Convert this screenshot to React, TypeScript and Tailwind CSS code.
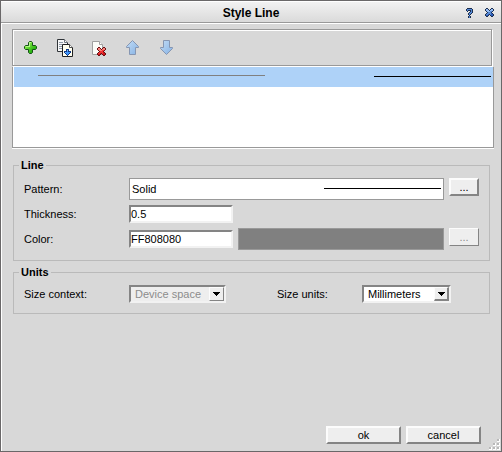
import type { ReactNode } from "react";

const bevel =
  "border-2 border-t-[#fcfcfc] border-l-[#fcfcfc] border-r-[#848484] border-b-[#848484] bg-[#eeeeee]";
const sunken =
  "border-2 border-t-[#848484] border-l-[#848484] border-r-[#f2f2f2] border-b-[#f2f2f2]";

const crossMap = [
  ".kk...kk.",
  "kllk.kllk",
  "klllklllk",
  ".klllmmk.",
  "..kmmmk..",
  ".kmmmmdk.",
  "kmmdkmddk",
  "kddk.kddk",
  ".kk...kk.",
];

const helpMap = [
  ".kkkkk.",
  "kmmmmmk",
  "kmkkkmk",
  ".k..kmk",
  "...kmmk",
  "..kmmk.",
  "..kmk..",
  "...k...",
  "..kmk..",
  "..kmk..",
];

const smallArrowMap = [
  "..kkk..",
  "..klk..",
  "kkkmkkk",
  "klmmmmk",
  ".kmmmk.",
  "..kmk..",
  "...k...",
];

const blue: Record<string, string> = { k: "#1c2f50", l: "#94bcf4", m: "#5688d4", d: "#2c5cb8" };
const red: Record<string, string> = { k: "#681014", l: "#fc8078", m: "#f03434", d: "#cc1418" };
const bright: Record<string, string> = { k: "#123884", l: "#7cc0ff", m: "#3c94fa", d: "#2c70e0" };

function Pixels({
  map,
  palette,
  x = 0,
  y = 0,
}: {
  map: string[];
  palette: Record<string, string>;
  x?: number;
  y?: number;
}) {
  return (
    <g shapeRendering="crispEdges">
      {map.flatMap((row, r) =>
        [...row].map((cell, c) =>
          cell === "." ? null : (
            <rect key={`${r}-${c}`} x={x + c} y={y + r} width="1" height="1" fill={palette[cell]} />
          ),
        ),
      )}
    </g>
  );
}

function AddIcon() {
  return (
    <svg width="18" height="18" viewBox="0 0 18 18" aria-hidden="true">
      <defs>
        <linearGradient id="add" x1="0" y1="0" x2="1" y2="1">
          <stop offset="0.2" stopColor="#8cf04a" />
          <stop offset="0.8" stopColor="#18a808" />
        </linearGradient>
      </defs>
      <path
        d="M6.5 3.5l1-1h2l1 1v3h3l1 1v2l-1 1h-3v3l-1 1h-2l-1-1v-3h-3l-1-1v-2l1-1h3z"
        fill="url(#add)"
        stroke="#17501a"
      />
      <path d="M7.5 7V3.500h1.500M4 7.500h4" fill="none" stroke="#b4f88a" />
    </svg>
  );
}

function CopyIcon() {
  return (
    <svg width="18" height="18" viewBox="0 0 18 18" aria-hidden="true">
      <path d="M1.500 0.500h7l3 3v9h-10z" fill="#f8f8f8" stroke="#303438" />
      <path d="M3 3.500h4M3 5.500h3M3 7.500h3M3 9.500h3" stroke="#8e9aa8" />
      <path d="M8.500 0.500v3h3" fill="#ffffff" stroke="#707880" />
      <path d="M6.500 5.500h7l3 3v9h-10z" fill="#fffff0" stroke="#202020" />
      <path d="M13.500 5.500v3h3" fill="#ffffff" stroke="#505050" />
      <Pixels map={smallArrowMap} palette={bright} x={8} y={10} />
    </svg>
  );
}

function DeleteIcon() {
  return (
    <svg width="18" height="18" viewBox="0 0 18 18" aria-hidden="true">
      <path d="M2.500 2.500h7l3 3v10h-10z" fill="#fbfcf8" stroke="#a0a0a0" />
      <path d="M9.500 2.500v3h3" fill="#ffffff" stroke="#a0a0a0" />
      <Pixels map={crossMap} palette={red} x={7} y={8} />
    </svg>
  );
}

function ArrowIcon({ down = false }: { down?: boolean }) {
  return (
    <svg width="18" height="18" viewBox="0 0 18 18" aria-hidden="true">
      <defs>
        <linearGradient id={down ? "down" : "up"} x1="0" y1="0" x2="1" y2="1">
          <stop offset="0" stopColor="#c2dcf6" />
          <stop offset="1" stopColor="#86b2e4" />
        </linearGradient>
      </defs>
      <path
        d={
          down
            ? "M5.500 1.500h6v7h3v1l-6 6-6-6v-1h3z"
            : "M8.500 1.500l6 6v1h-3v7h-6v-7h-3v-1z"
        }
        fill={down ? "url(#down)" : "url(#up)"}
        stroke="#8696b2"
      />
    </svg>
  );
}

function ToolButton({ label, disabled, children }: { label: string; disabled?: boolean; children: ReactNode }) {
  return (
    <button type="button" aria-label={label} disabled={disabled} className="px-2 pt-[9px] pb-2">
      {children}
    </button>
  );
}

function Group({ title, children }: { title: string; children: ReactNode }) {
  return (
    <fieldset className="ml-px mr-1 border border-[#bababa] px-[10px] pt-[6px] pb-[10px]">
      <legend className="-ml-[5px] px-[2px] font-bold leading-[13px]">{title}</legend>
      {children}
    </fieldset>
  );
}

function Select({ id, value, disabled }: { id: string; value: string; disabled?: boolean }) {
  return (
    <div className={`relative h-[18px] ${sunken} ${disabled ? "w-[97px] bg-[#eeeeee]" : "w-[89px] bg-white"}`}>
      <select
        id={id}
        disabled={disabled}
        className="block h-[14px] w-full appearance-none bg-transparent pl-1 leading-[14px] outline-none disabled:text-[#8c8c8c] disabled:opacity-100"
      >
        <option>{value}</option>
      </select>
      <span
        className={`pointer-events-none absolute top-0 right-0 flex h-[14px] w-[15px] items-center justify-center border-t border-l border-t-[#fcfcfc] border-l-[#fcfcfc] border-r-[#848484] border-b-[#848484] bg-[#eeeeee] ${disabled ? "border-r border-b" : "border-r-2 border-b-2"}`}
      >
        <svg width="7" height="4" viewBox="0 0 7 4" shapeRendering="crispEdges" aria-hidden="true">
          <path d="M0 0h7v1h-1v1h-1v1h-1v1h-1v-1h-1v-1h-1v-1h-1z" />
        </svg>
      </span>
    </div>
  );
}

function Grip() {
  return (
    <svg
      className="absolute right-px bottom-px"
      width="12"
      height="12"
      viewBox="0 0 12 12"
      shapeRendering="crispEdges"
      aria-hidden="true"
    >
      {[
        [9, 1],
        [5, 5],
        [9, 5],
        [1, 9],
        [5, 9],
        [9, 9],
      ].map(([x, y]) => (
        <g key={`${x}-${y}`}>
          <rect x={x} y={y} width="3" height="3" fill="#ffffff" />
          <rect x={x} y={y} width="2" height="2" fill="#b8b8b8" />
        </g>
      ))}
    </svg>
  );
}

export default function App() {
  return (
    <main className="relative flex min-h-screen flex-col border border-[#6a6869] bg-[#d8d8d8] font-['Liberation_Sans',Arial,sans-serif] text-[11px] leading-[14px] text-black">
      <header className="grid h-[23px] grid-cols-[1fr_auto_1fr] items-center border-t border-b border-white bg-linear-to-b from-[#f2f2f2] to-[#d9d9d9] shadow-[inset_0_-1px_0_#999999]">
        <h1 className="col-start-2 text-[12px] font-bold">Style Line</h1>
        <div className="flex items-center justify-end gap-3 pr-[7px]">
          <button type="button" aria-label="Help">
            <svg width="7" height="10" viewBox="0 0 7 10" aria-hidden="true">
              <Pixels map={helpMap} palette={blue} />
            </svg>
          </button>
          <button type="button" aria-label="Close">
            <svg width="9" height="9" viewBox="0 0 9 9" aria-hidden="true">
              <Pixels map={crossMap} palette={blue} />
            </svg>
          </button>
        </div>
      </header>

      <div className="flex grow flex-col border-l border-white pt-[5px] pr-[7px] pb-[7px] pl-[10px]">
        <div
          role="toolbar"
          aria-label="Lines"
          className="mr-[2px] mb-px flex border border-[#999999] shadow-[inset_1px_1px_0_#ffffff,1px_1px_0_#ffffff]"
        >
          <div className="flex pl-px">
            <ToolButton label="Add">
              <AddIcon />
            </ToolButton>
            <ToolButton label="Duplicate">
              <CopyIcon />
            </ToolButton>
            <ToolButton label="Delete">
              <DeleteIcon />
            </ToolButton>
            <ToolButton label="Move up" disabled>
              <ArrowIcon />
            </ToolButton>
            <ToolButton label="Move down" disabled>
              <ArrowIcon down />
            </ToolButton>
          </div>
        </div>
        <ul className="mb-[11px] h-[81px] border-r border-b border-l border-[#999999] bg-white pl-px shadow-[0_1px_0_#ffffff]">
          <li className="flex h-5 justify-between bg-[#aed2f8] pt-2 pr-[2px] pl-6">
            <span className="h-px w-[227px] bg-[#808080]" />
            <span className="mt-px h-px w-[117px] bg-black" />
          </li>
        </ul>

        <div className="flex flex-col gap-[5px]">
          <Group title="Line">
            <div className="grid grid-cols-[105px_1fr_30px] items-center gap-y-[5px]">
              <label htmlFor="pattern">Pattern:</label>
              <div className="mr-[5px] flex h-[22px] border border-[#999999] bg-white pr-[2px] pl-[2px]">
                <input id="pattern" readOnly defaultValue="Solid" className="min-w-0 grow outline-none" />
                <span className="mt-[9px] h-px w-[117px] bg-black" />
              </div>
              <button type="button" aria-label="Choose pattern" className={`h-[18px] self-start leading-[14px] ${bevel}`}>
                ...
              </button>

              <label htmlFor="thickness">Thickness:</label>
              <input
                id="thickness"
                defaultValue="0.5"
                className={`col-span-2 h-[18px] w-[104px] bg-white outline-none ${sunken}`}
              />

              <label htmlFor="color">Color:</label>
              <div className="mr-[5px] flex items-center gap-[5px]">
                <input
                  id="color"
                  defaultValue="FF808080"
                  className={`h-[18px] w-[104px] bg-white outline-none ${sunken}`}
                />
                <span className="h-[22px] grow border border-[#999999] bg-[#808080]" />
              </div>
              <button
                type="button"
                disabled
                aria-label="Choose color"
                className="h-[18px] self-start border border-t-[#fcfcfc] border-r-[#848484] border-b-[#848484] border-l-[#fcfcfc] bg-[#eeeeee] leading-[16px] text-[#8c8c8c]"
              >
                ...
              </button>
            </div>
          </Group>

          <Group title="Units">
            <div className="grid grid-cols-[105px_148px_85px_1fr] items-center">
              <label htmlFor="context">Size context:</label>
              <Select id="context" value="Device space" disabled />
              <label htmlFor="units">Size units:</label>
              <Select id="units" value="Millimeters" />
            </div>
          </Group>
        </div>

        <footer className="mt-auto flex justify-end gap-[5px] pr-[13px]">
          <button type="button" className={`h-[18px] w-[75px] leading-[14px] ${bevel}`}>
            ok
          </button>
          <button type="button" className={`h-[18px] w-[75px] leading-[14px] ${bevel}`}>
            cancel
          </button>
        </footer>
      </div>
      <Grip />
    </main>
  );
}
